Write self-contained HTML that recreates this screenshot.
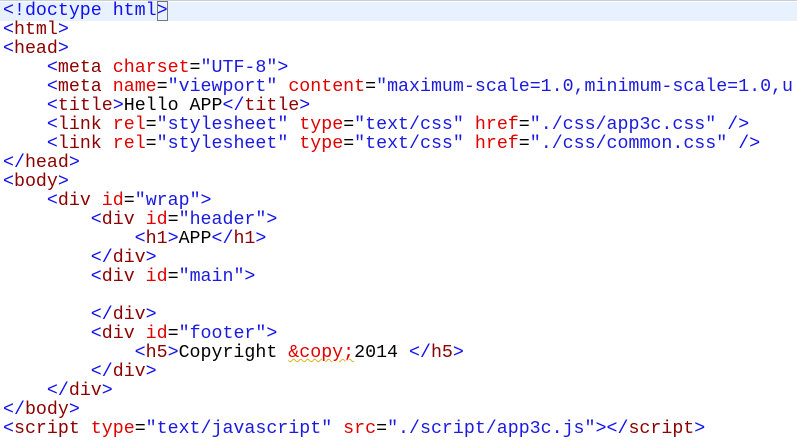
<!DOCTYPE html>
<html><head><meta charset="utf-8"><style>
body{margin:0;width:797px;height:440px;overflow:hidden;background:#fff;border-top:1px solid #c8d0dc;box-sizing:border-box}
.c{font-family:"Liberation Mono",monospace;font-size:18.3px;padding-left:3px;padding-top:1px}
.l{height:19px;line-height:19px;white-space:pre}
.h{background:#e8f2fe;margin-left:-3px;padding-left:3px}
.t{color:#1010f0}.n{color:#8b0000}.a{color:#e00000}.v{color:#1a1ae0}.x{color:#000}
.cur{outline:1px solid #777;outline-offset:-1px}
.sq{text-decoration:underline wavy #e0b020;text-decoration-thickness:1px}
</style></head><body><div class="c"><div class="l h"><span class="t">&lt;!doctype html<span class="cur">&gt;</span></span></div><div class="l"><span class="t">&lt;</span><span class="n">html</span><span class="t">&gt;</span></div><div class="l"><span class="t">&lt;</span><span class="n">head</span><span class="t">&gt;</span></div><div class="l">    <span class="t">&lt;</span><span class="n">meta</span> <span class="a">charset</span>=<span class="v">"UTF-8"</span><span class="t">&gt;</span></div><div class="l">    <span class="t">&lt;</span><span class="n">meta</span> <span class="a">name</span>=<span class="v">"viewport"</span> <span class="a">content</span>=<span class="v">"maximum-scale=1.0,minimum-scale=1.0,u</span></div><div class="l">    <span class="t">&lt;</span><span class="n">title</span><span class="t">&gt;</span>Hello APP<span class="t">&lt;/</span><span class="n">title</span><span class="t">&gt;</span></div><div class="l">    <span class="t">&lt;</span><span class="n">link</span> <span class="a">rel</span>=<span class="v">"stylesheet"</span> <span class="a">type</span>=<span class="v">"text/css"</span> <span class="a">href</span>=<span class="v">"./css/app3c.css"</span> <span class="t">/&gt;</span></div><div class="l">    <span class="t">&lt;</span><span class="n">link</span> <span class="a">rel</span>=<span class="v">"stylesheet"</span> <span class="a">type</span>=<span class="v">"text/css"</span> <span class="a">href</span>=<span class="v">"./css/common.css"</span> <span class="t">/&gt;</span></div><div class="l"><span class="t">&lt;/</span><span class="n">head</span><span class="t">&gt;</span></div><div class="l"><span class="t">&lt;</span><span class="n">body</span><span class="t">&gt;</span></div><div class="l">    <span class="t">&lt;</span><span class="n">div</span> <span class="a">id</span>=<span class="v">"wrap"</span><span class="t">&gt;</span></div><div class="l">        <span class="t">&lt;</span><span class="n">div</span> <span class="a">id</span>=<span class="v">"header"</span><span class="t">&gt;</span></div><div class="l">            <span class="t">&lt;</span><span class="n">h1</span><span class="t">&gt;</span>APP<span class="t">&lt;/</span><span class="n">h1</span><span class="t">&gt;</span></div><div class="l">        <span class="t">&lt;/</span><span class="n">div</span><span class="t">&gt;</span></div><div class="l">        <span class="t">&lt;</span><span class="n">div</span> <span class="a">id</span>=<span class="v">"main"</span><span class="t">&gt;</span></div><div class="l"> </div><div class="l">        <span class="t">&lt;/</span><span class="n">div</span><span class="t">&gt;</span></div><div class="l">        <span class="t">&lt;</span><span class="n">div</span> <span class="a">id</span>=<span class="v">"footer"</span><span class="t">&gt;</span></div><div class="l">            <span class="t">&lt;</span><span class="n">h5</span><span class="t">&gt;</span>Copyright <span class="a sq">&amp;copy;</span>2014 <span class="t">&lt;/</span><span class="n">h5</span><span class="t">&gt;</span></div><div class="l">        <span class="t">&lt;/</span><span class="n">div</span><span class="t">&gt;</span></div><div class="l">    <span class="t">&lt;/</span><span class="n">div</span><span class="t">&gt;</span></div><div class="l"><span class="t">&lt;/</span><span class="n">body</span><span class="t">&gt;</span></div><div class="l"><span class="t">&lt;</span><span class="n">script</span> <span class="a">type</span>=<span class="v">"text/javascript"</span> <span class="a">src</span>=<span class="v">"./script/app3c.js"</span><span class="t">&gt;&lt;/</span><span class="n">script</span><span class="t">&gt;</span></div></div></body></html>
